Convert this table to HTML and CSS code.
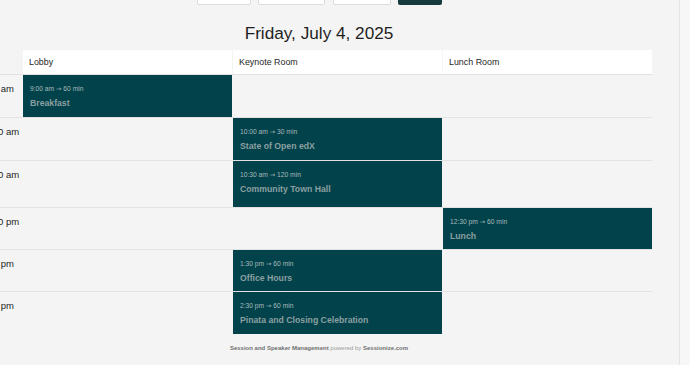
FILE: index.html
```html
<!DOCTYPE html>
<html lang="en">
<head>
<meta charset="utf-8">
<title>Schedule</title>
<link rel="stylesheet" href="styles.css">
</head>
<body>
<div class="page">
  <div class="toolbar">
    <span class="btn btn-a"></span>
    <span class="btn btn-b"></span>
    <span class="btn btn-c"></span>
    <span class="btn btn-dark"></span>
  </div>
  <h1 class="day-title">Friday, July 4, 2025</h1>
  <div class="schedule">
    <div class="row row-head">
      <div class="time"></div>
      <div class="room">Lobby</div>
      <div class="room">Keynote Room</div>
      <div class="room">Lunch Room</div>
    </div>
    <div class="row r1">
      <div class="time">9:00 am</div>
      <div class="cell"><div class="session"><div class="s-time">9:00 am <span class="arr">→</span> 60 min</div><div class="s-title">Breakfast</div></div></div>
      <div class="cell"></div>
      <div class="cell"></div>
    </div>
    <div class="row r2">
      <div class="time">10:00 am</div>
      <div class="cell"></div>
      <div class="cell"><div class="session"><div class="s-time">10:00 am <span class="arr">→</span> 30 min</div><div class="s-title">State of Open edX</div></div></div>
      <div class="cell"></div>
    </div>
    <div class="row r3">
      <div class="time">10:30 am</div>
      <div class="cell"></div>
      <div class="cell"><div class="session"><div class="s-time">10:30 am <span class="arr">→</span> 120 min</div><div class="s-title">Community Town Hall</div></div></div>
      <div class="cell"></div>
    </div>
    <div class="row r4">
      <div class="time">12:30 pm</div>
      <div class="cell"></div>
      <div class="cell"></div>
      <div class="cell"><div class="session"><div class="s-time">12:30 pm <span class="arr">→</span> 60 min</div><div class="s-title">Lunch</div></div></div>
    </div>
    <div class="row r5">
      <div class="time">1:30 pm</div>
      <div class="cell"></div>
      <div class="cell"><div class="session"><div class="s-time">1:30 pm <span class="arr">→</span> 60 min</div><div class="s-title">Office Hours</div></div></div>
      <div class="cell"></div>
    </div>
    <div class="row r6 last">
      <div class="time">2:30 pm</div>
      <div class="cell"></div>
      <div class="cell"><div class="session"><div class="s-time">2:30 pm <span class="arr">→</span> 60 min</div><div class="s-title">Pinata and Closing Celebration</div></div></div>
      <div class="cell"></div>
    </div>
  </div>
  <p class="footer"><b>Session and Speaker Management</b> <span class="pw">powered by</span> <b>Sessionize.com</b></p>
</div>
</body>
</html>
```

FILE: styles.css
```css
html {
  background: #f7f7f7;
}
body {
  margin: 0;
  font-family: "Liberation Sans", Arial, sans-serif;
  color: #222;
  overflow: hidden;
}
.page {
  margin-left: -41px;
  margin-top: -20px;
  width: 720px;
  min-height: 420px;
  background: #f4f4f4;
  border-right: 1px solid #e4e4e4;
}
.toolbar {
  display: flex;
  justify-content: center;
  gap: 7px;
  height: 25px;
}
.btn {
  display: block;
  height: 23px;
  background: #fff;
  border: 1px solid #dcdcdc;
  border-radius: 2px;
}
.btn-a { width: 52px; }
.btn-b { width: 65px; }
.btn-c { width: 56px; margin-left: 1px; }
.btn-dark {
  width: 44px;
  height: 25px;
  border: none;
  background: #163a3e;
}
.day-title {
  margin: 18px 0 7px;
  font-size: 17.2px;
  line-height: 20px;
  font-weight: normal;
  text-align: center;
  color: #1e1e1e;
}
.schedule {
  padding-left: 19px;
}
.row {
  display: grid;
  grid-template-columns: 44px 209px 209px 209px;
  column-gap: 1px;
  width: 674px;
  border-bottom: 1px solid #e3e3e3;
}
.row.last {
  border-bottom: none;
}
.row-head {
  height: 24px;
  border-bottom: 1px solid #e0e0e0;
}
.room {
  background: #fff;
  font-size: 8.9px;
  line-height: 24px;
  padding-left: 6px;
  color: #1e1e1e;
}
.r1 { height: 42px; }
.r2 { height: 42px; }
.r3 { height: 46px; }
.r4 { height: 41px; }
.r5 { height: 41px; }
.r6 { height: 42px; }
.time {
  font-size: 9.5px;
  line-height: 11px;
  padding: 8px 0 0 1.5px;
  color: #1e1e1e;
  white-space: nowrap;
}
.row-head .time {
  padding-top: 0;
}
.cell {
  display: flex;
}
.session {
  flex: 1;
  background: #02434b;
  padding: 9px 7px 0;
}
.s-time {
  height: 9px;
  font-size: 6.7px;
  line-height: 9px;
  color: #a9b9bb;
  white-space: nowrap;
}
.arr {
  font-family: "DejaVu Sans", sans-serif;
  font-size: 6.5px;
  line-height: 0;
}
.s-title {
  margin-top: 4px;
  font-size: 8.7px;
  line-height: 12px;
  font-weight: bold;
  color: #8c9fa1;
  white-space: nowrap;
}
.footer {
  margin: 10px 0 0;
  text-align: center;
  font-size: 6px;
  line-height: 8px;
  color: #707070;
}
.footer b {
  font-weight: bold;
}
.footer .pw {
  color: #9a9a9a;
}
```
